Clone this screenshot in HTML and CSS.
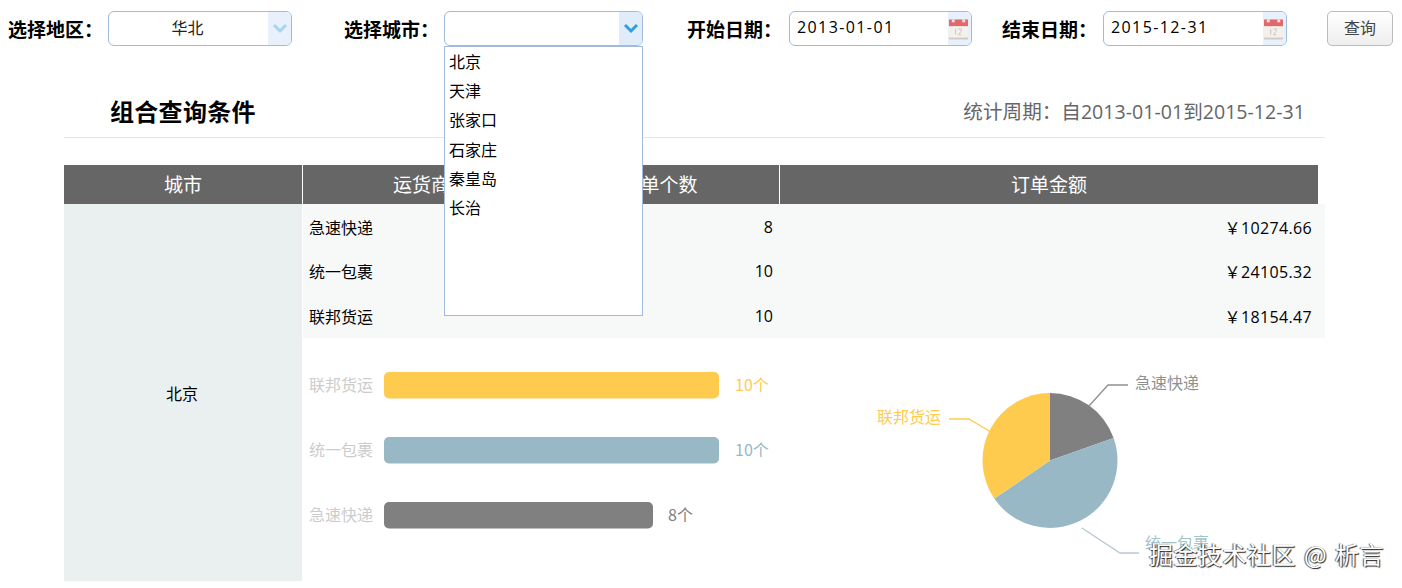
FILE: index.html
```html
<!DOCTYPE html>
<html lang="zh-CN">
<head>
<meta charset="utf-8">
<title>组合查询条件</title>
<link rel="stylesheet" href="styles.css">
</head>
<body>
<div class="toolbar">
  <span class="label">选择地区：</span>
  <div class="combo combo-region">
    <span class="combo-value">华北</span>
    <span class="trigger"><svg class="chev" width="16" height="11" viewBox="0 0 16 11"><path d="M2 2l6 6 6-6" fill="none" stroke="#a8d3f3" stroke-width="3"/></svg></span>
  </div>
  <span class="label">选择城市：</span>
  <div class="combo combo-city">
    <span class="combo-value"></span>
    <span class="trigger trigger-active"><svg class="chev" width="16" height="11" viewBox="0 0 16 11"><path d="M2 2l6 6 6-6" fill="none" stroke="#2f9fe2" stroke-width="3"/></svg></span>
    <ul class="dropdown">
      <li>北京</li><li>天津</li><li>张家口</li><li>石家庄</li><li>秦皇岛</li><li>长治</li>
    </ul>
  </div>
  <span class="label">开始日期：</span>
  <div class="combo date date-start">
    <span class="date-value">2013-01-01</span>
    <span class="trigger trigger-date"><svg width="22" height="24" viewBox="0 0 22 24"><rect x="1" y="2" width="20" height="21" fill="#f4f1ec"/><rect x="1" y="2" width="20" height="7" fill="#e2696b"/><rect x="4" y="2" width="3" height="3" fill="#fbe3e3"/><rect x="15" y="2" width="3" height="3" fill="#fbe3e3"/><rect x="1" y="21" width="20" height="2" fill="#cfcbc4"/><path d="M8 12v6M11 12h3v2l-3 4h3" fill="none" stroke="#c9c6c0" stroke-width="1"/></svg></span>
  </div>
  <span class="label">结束日期：</span>
  <div class="combo date date-end">
    <span class="date-value">2015-12-31</span>
    <span class="trigger trigger-date"><svg width="22" height="24" viewBox="0 0 22 24"><rect x="1" y="2" width="20" height="21" fill="#f4f1ec"/><rect x="1" y="2" width="20" height="7" fill="#e2696b"/><rect x="4" y="2" width="3" height="3" fill="#fbe3e3"/><rect x="15" y="2" width="3" height="3" fill="#fbe3e3"/><rect x="1" y="21" width="20" height="2" fill="#cfcbc4"/><path d="M8 12v6M11 12h3v2l-3 4h3" fill="none" stroke="#c9c6c0" stroke-width="1"/></svg></span>
  </div>
  <button class="query" type="button">查询</button>
</div>

<main class="content">
  <header class="title-row">
    <h1 class="title">组合查询条件</h1>
    <span class="period">统计周期：自2013-01-01到2015-12-31</span>
  </header>

  <div class="thead">
    <div class="th th-city">城市</div>
    <div class="th th-carrier">运货商</div>
    <div class="th th-count">订单个数</div>
    <div class="th th-amount">订单金额</div>
  </div>

  <div class="tbody">
    <div class="city">北京</div>
    <div class="detail">
      <div class="rows">
        <div class="row"><span class="c-carrier">急速快递</span><span class="c-count">8</span><span class="c-amount">￥10274.66</span></div>
        <div class="row"><span class="c-carrier">统一包裹</span><span class="c-count">10</span><span class="c-amount">￥24105.32</span></div>
        <div class="row"><span class="c-carrier">联邦货运</span><span class="c-count">10</span><span class="c-amount">￥18154.47</span></div>
      </div>
      <svg class="charts" width="1022" height="243" viewBox="303 338 1022 243">
        <g class="axis-label">
          <text x="309" y="391">联邦货运</text>
          <text x="309" y="456">统一包裹</text>
          <text x="309" y="521">急速快递</text>
        </g>
        <rect x="384" y="372" width="335" height="26.500" rx="5" fill="#ffcb4f"/>
        <rect x="384" y="437" width="335" height="26.500" rx="5" fill="#98b8c5"/>
        <rect x="384" y="502" width="269" height="26.500" rx="5" fill="#808080"/>
        <text class="val" x="735" y="391" fill="#ffcb4f">10个</text>
        <text class="val" x="735" y="456" fill="#98b8c5">10个</text>
        <text class="val" x="668" y="521" fill="#808080">8个</text>

        <path d="M1050 460.500V393A67.500 67.500 0 0 1 1113.600 437.900Z" fill="#808080"/>
        <path d="M1050 460.500L1113.600 437.900A67.500 67.500 0 0 1 994.300 498.600Z" fill="#98b8c5"/>
        <path d="M1050 460.500L994.300 498.600A67.500 67.500 0 0 1 1050 393Z" fill="#ffcb4f"/>
        <path class="leader" d="M1089 406L1108 385H1128" stroke="#909090"/>
        <path class="leader" d="M1082 528L1120 553H1139" stroke="#b5cbd2"/>
        <path class="leader" d="M991 432L969 419H949" stroke="#ffcb4f"/>
        <text class="val" x="1135" y="389" fill="#909090">急速快递</text>
        <text class="val" x="1145" y="549" fill="#a5c4c8">统一包裹</text>
        <text class="val" x="877" y="423" fill="#ffcb4f">联邦货运</text>
      </svg>
    </div>
  </div>
</main>

<div class="watermark">掘金技术社区 @ 析言</div>
</body>
</html>
```
FILE: styles.css
```css
* { box-sizing: border-box; }
html, body { margin: 0; height: 588px; overflow: hidden; background: #fff; }
body {
  position: relative;
  font-family: "Noto Sans CJK SC", "Open Sans", sans-serif;
  color: #000;
  padding-top: 11px;
}

.toolbar {
  display: flex;
  align-items: center;
  height: 35px;
  padding-left: 8px;
}
.label { width: 84px; font-size: 19px; font-weight: 700; white-space: nowrap; flex: none; margin-right: 16px; }

.combo {
  position: relative;
  display: flex;
  height: 35px;
  flex: none;
  border: 1px solid #9fbcdc;
  border-radius: 6px;
  background: #fff;
}
.combo-region { width: 184px; margin-right: 52px; }
.combo-city { width: 199px; margin-right: 44px; }
.date-start { width: 183px; margin-left: 2px; margin-right: 30px; }
.date-end { width: 184px; margin-left: 1px; margin-right: 40px; }

.combo-value { flex: 1; text-align: center; font-size: 16px; line-height: 30px; color: #222; padding-right: 2px; }
.date-value { flex: 1; font-family: "Open Sans", sans-serif; font-size: 16px; line-height: 30px; padding-left: 7px; letter-spacing: 1.4px; }

.trigger {
  width: 23px;
  flex: none;
  display: flex;
  align-items: center;
  justify-content: center;
  background: #e8f1fb;
  border-radius: 0 5px 5px 0;
}
.trigger-active { background: #e0ecfa; }
.trigger-date { padding-right: 2px; }

.dropdown {
  position: absolute;
  left: -1px;
  top: 34px;
  width: 199px;
  height: 270px;
  margin: 0;
  padding: 0 0 0 4px;
  list-style: none;
  background: #fff;
  border: 1px solid #9fbcdc;
  z-index: 5;
  font-size: 16px;
  line-height: 29.2px;
}

.query {
  width: 66px;
  height: 35px;
  flex: none;
  padding: 0 0 3px;
  border: 1px solid #bbb;
  border-radius: 5px;
  background: linear-gradient(#fff, #eee);
  font: inherit;
  font-size: 16px;
  color: #444;
}

.content { margin-left: 64px; width: 1261px; padding-top: 45px; }

.title-row {
  display: flex;
  justify-content: space-between;
  align-items: center;
  height: 47px;
  padding: 0 20px 7px 46px;
  border-bottom: 1px solid #e5e5e5;
}
.title { margin: 0; font-size: 24px; font-weight: 700; line-height: 34px; letter-spacing: 0.3px; }
.period { font-family: "Open Sans", "Noto Sans CJK SC", sans-serif; font-size: 19.6px; color: #666; }

.thead {
  display: grid;
  grid-template-columns: 238px 238px 239px 539px;
  width: 1254px;
  height: 39px;
  margin-top: 27px;
  background: #666;
  color: #fff;
  font-size: 19px;
  line-height: 38px;
  text-align: center;
}
.th-carrier { border-left: 1px solid #fff; }
.th-amount { border-left: 1px solid #fff; }

.tbody { display: flex; height: 377px; }
.city {
  width: 238px;
  flex: none;
  display: flex;
  align-items: center;
  justify-content: center;
  padding-right: 2px;
  background: #eaeff0;
  font-size: 16px;
}
.detail { flex: 1; min-width: 0; display: flex; flex-direction: column; }
.rows { display: grid; grid-auto-rows: 44.67px; background: #f7f9f9; font-size: 16px; margin-left: 1px; }
.row { display: grid; grid-template-columns: 238px 226px 539px; align-items: center; padding: 1px 0 0 6px; }
.c-count, .c-amount { text-align: right; font-family: "Open Sans", "Noto Sans CJK SC", sans-serif; }
.c-amount { letter-spacing: 0.35px; }

.charts { display: block; flex: none; margin-left: 1px; }
.axis-label text { fill: #ccc; font-size: 16px; }
.val { font-size: 16px; }
.leader { fill: none; stroke-width: 1.3; }

.watermark {
  position: absolute;
  left: 1149px;
  top: 537px;
  font-size: 24px;
  letter-spacing: 0.5px;
  word-spacing: 2px;
  line-height: 34px;
  white-space: nowrap;
  color: #fff;
  text-shadow: 1px 1px 1px #222, -1px 0 1px #555;
}
```
